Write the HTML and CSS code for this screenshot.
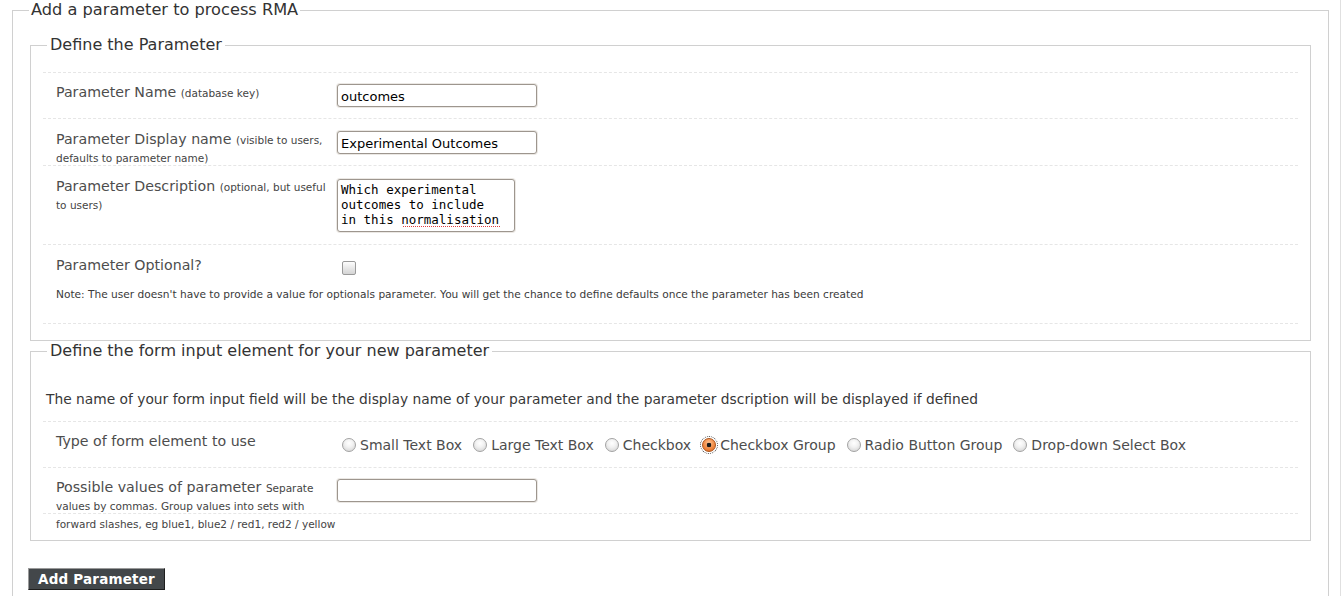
FILE: index.html
```html
<!DOCTYPE html>
<html lang="en">
<head>
<meta charset="utf-8">
<title>Add a parameter to process RMA</title>
<link rel="stylesheet" href="styles.css">
</head>
<body>
<div class="page">
  <form class="outer" action="#">
    <fieldset class="outer-set">
      <legend class="outer-legend">Add a parameter to process RMA</legend>

      <fieldset class="group group-define">
        <legend class="group-legend">Define the Parameter</legend>
        <ol class="rows">
          <li class="row">
            <div class="line">
              <label class="lbl" for="p-name">Parameter Name <small class="hint">(database key)</small></label>
              <div class="field"><input class="text" id="p-name" type="text" value="outcomes"></div>
            </div>
          </li>
          <li class="row">
            <div class="line">
              <label class="lbl" for="p-display">Parameter Display name <small class="hint">(visible to users, defaults to parameter name)</small></label>
              <div class="field"><input class="text" id="p-display" type="text" value="Experimental Outcomes"></div>
            </div>
          </li>
          <li class="row">
            <div class="line">
              <label class="lbl" for="p-desc">Parameter Description <small class="hint">(optional, but useful to users)</small></label>
              <div class="field"><textarea class="area" id="p-desc" rows="3" spellcheck="false">Which experimental
outcomes to include
in this normalisation</textarea></div>
            </div>
          </li>
          <li class="row">
            <div class="line">
              <label class="lbl" for="p-opt">Parameter Optional?</label>
              <div class="field"><input class="check" id="p-opt" type="checkbox"></div>
            </div>
            <p class="note">Note: The user doesn't have to provide a value for optionals parameter. You will get the chance to define defaults once the parameter has been created</p>
          </li>
        </ol>
      </fieldset>

      <fieldset class="group group-input">
        <legend class="group-legend">Define the form input element for your new parameter</legend>
        <p class="intro">The name of your form input field will be the display name of your parameter and the parameter dscription will be displayed if defined</p>
        <ol class="rows">
          <li class="row">
            <div class="line">
              <span class="lbl">Type of form element to use</span>
              <div class="field radios">
                <label class="opt"><input class="radio" type="radio" name="kind">Small Text Box</label>
                <label class="opt"><input class="radio" type="radio" name="kind">Large Text Box</label>
                <label class="opt"><input class="radio" type="radio" name="kind">Checkbox</label>
                <label class="opt"><input class="radio is-focus" type="radio" name="kind" checked>Checkbox Group</label>
                <label class="opt"><input class="radio" type="radio" name="kind">Radio Button Group</label>
                <label class="opt"><input class="radio" type="radio" name="kind">Drop-down Select Box</label>
              </div>
            </div>
          </li>
          <li class="row">
            <div class="line">
              <label class="lbl" for="p-values">Possible values of parameter <small class="hint">Separate values by commas. Group values into sets with forward slashes, eg blue1, blue2 / red1, red2 / yellow</small></label>
              <div class="field"><input class="text" id="p-values" type="text" value=""></div>
            </div>
          </li>
        </ol>
      </fieldset>

      <button class="submit" type="button">Add Parameter</button>
    </fieldset>
  </form>
</div>
</body>
</html>
```

FILE: styles.css
```css
html, body {
  margin: 0;
  padding: 0;
  background: #fff;
}

body {
  font-family: "DejaVu Sans", "Liberation Sans", sans-serif;
  color: #4a4a4a;
}

.page {
  padding: 0 11px 0 12px;
  border-right: 1px solid #e0e0e0;
  min-height: 100vh;
  box-sizing: border-box;
}

.outer {
  margin: 0;
}

.outer-set {
  margin: 0;
  padding: 15px 17px 40px;
  border: 1px solid #d0d0d0;
  min-width: 0;
}

.outer-legend {
  margin-left: -1px;
  padding: 0 2px;
  font-size: 16.2px;
  line-height: 20px;
  color: #333;
}

.group {
  margin: 0;
  padding: 17px 12px 16px;
  border: 1px solid #d0d0d0;
  min-width: 0;
}

.group-input {
  padding-bottom: 26px;
}

.group-legend {
  margin-left: 4px;
  padding: 0 3px;
  font-size: 16px;
  line-height: 20px;
  color: #333;
}

.intro {
  margin: 13px 0;
  padding-left: 3px;
  font-size: 13.8px;
  line-height: 17px;
  color: #383838;
}

.rows {
  list-style: none;
  margin: 0;
  padding: 0;
  border-bottom: 1px dashed #e6e6e6;
}

.row {
  border-top: 1px dashed #e6e6e6;
  padding: 11px 13px;
}

.group-define .row + .row {
  padding-top: 12px;
}

.line {
  display: flex;
  align-items: flex-start;
}

.lbl {
  flex: none;
  width: 281px;
  height: 23px;
  font-size: 14.2px;
  line-height: 17px;
  color: #4d4d4d;
}

.hint {
  font-size: 10.5px;
  color: #444;
}

.field {
  flex: 1;
  min-width: 0;
}

.text {
  display: block;
  box-sizing: border-box;
  width: 200px;
  height: 23px;
  margin: 0;
  padding: 1px 3px 0;
  border: 1px solid #9d968e;
  border-radius: 3px;
  box-shadow: 0 0 0 1px #ebe8e4;
  background: #fff;
  font-family: "DejaVu Sans", sans-serif;
  font-size: 13px;
  color: #000;
  outline: none;
}

.area {
  display: block;
  box-sizing: border-box;
  width: 178px;
  height: 53px;
  margin: 1px 0;
  padding: 2px 3px;
  border: 1px solid #9d968e;
  border-radius: 3px;
  box-shadow: 0 0 0 1px #ebe8e4;
  background-color: #fff;
  background-image: repeating-linear-gradient(90deg, #e04040 0 1px, transparent 1px 2px);
  background-size: 98px 1px;
  background-position: 65px 46px;
  background-repeat: no-repeat;
  font-family: "DejaVu Sans Mono", monospace;
  font-size: 12.5px;
  line-height: 15px;
  color: #000;
  resize: none;
  overflow: hidden;
  outline: none;
}

.check {
  appearance: none;
  display: block;
  width: 14px;
  height: 14px;
  margin: 4px 0 0 5px;
  border: 1px solid #9a9a9a;
  border-radius: 2px;
  background: linear-gradient(#fdfdfd, #d4d4d4);
  box-sizing: border-box;
}

.note {
  margin: 8px 0 11px;
  font-size: 10.6px;
  line-height: 13px;
  color: #3a3a3a;
}

.radios {
  display: flex;
  flex-wrap: wrap;
  align-items: center;
  height: 22px;
  padding-top: 1px;
  box-sizing: border-box;
}

.opt {
  display: flex;
  align-items: center;
  margin-right: 6px;
  font-size: 14px;
  line-height: 20px;
  color: #4d4d4d;
}

.radio {
  appearance: none;
  flex: none;
  width: 14px;
  height: 14px;
  margin: 0 4px 0 5px;
  border: 1px solid #a3a3a3;
  border-radius: 50%;
  box-sizing: border-box;
  background: radial-gradient(circle at 50% 35%, #ffffff 0, #f2f2f2 40%, #cfcfcf 100%);
}

.radio:checked {
  border-color: #a9531c;
  background:
    radial-gradient(circle, #1a1a1a 0 2px, transparent 2.6px),
    radial-gradient(circle at 50% 35%, #ffc596 0, #f08a44 55%, #d9621b 100%);
}

.is-focus {
  outline: 1px dotted #444;
  outline-offset: 1px;
}

.submit {
  display: block;
  margin: 27px 0 0 -2px;
  height: 22px;
  padding: 0 9px;
  border: 1px solid;
  border-color: #9a9a9a #1e1e1e #1e1e1e #9a9a9a;
  background: #43474a;
  color: #fff;
  font-family: "DejaVu Sans", sans-serif;
  font-weight: bold;
  font-size: 13.5px;
  letter-spacing: 0.2px;
  line-height: 20px;
  cursor: pointer;
}
```
